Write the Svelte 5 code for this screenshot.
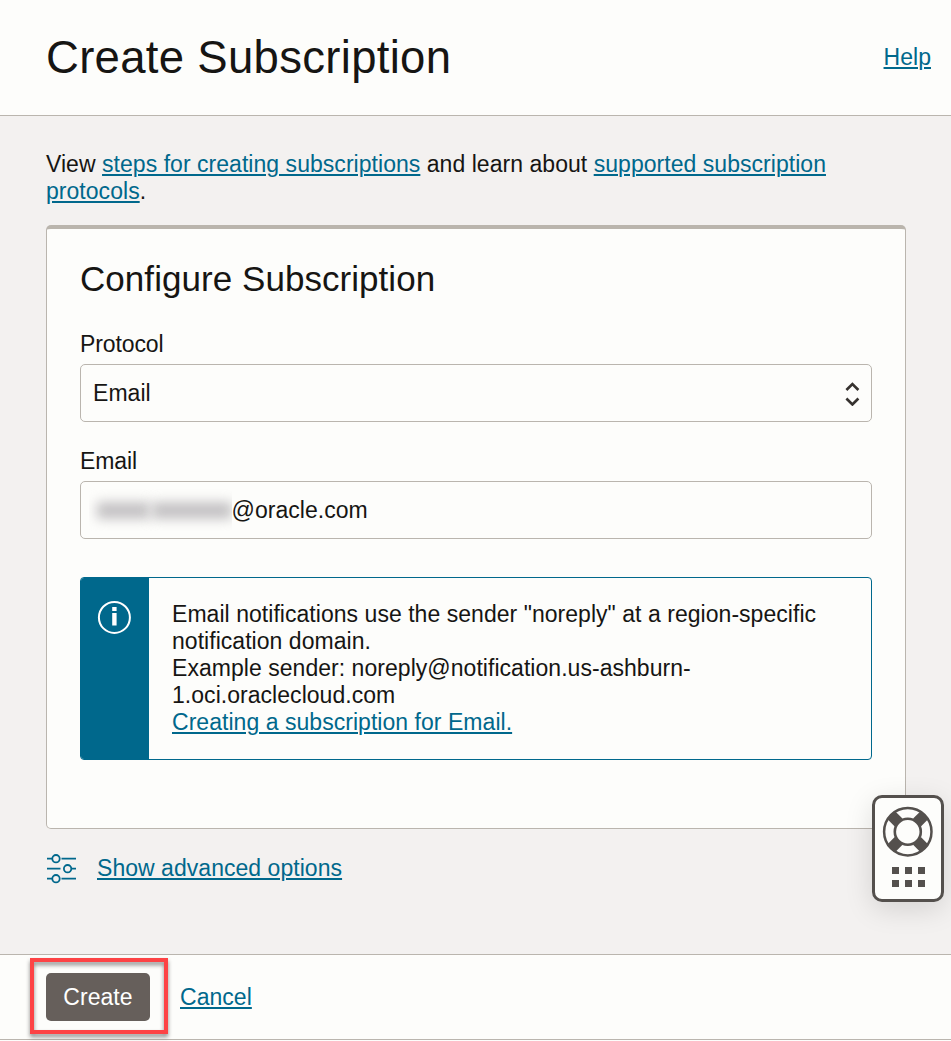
<script>
  let email = $state('@oracle.com');
</script>

<div class="page">
  <header>
    <h1>Create Subscription</h1>
    <a href="#help">Help</a>
  </header>

  <main>
    <p class="intro">
      View <a href="#steps">steps for creating subscriptions</a> and learn about
      <a href="#protocols">supported subscription protocols</a>.
    </p>

    <section class="card">
      <h2>Configure Subscription</h2>
      <div class="label">Protocol</div>
      <div class="field select">
        <span>Email</span>
        <svg width="16" height="26" viewBox="0 0 16 26" fill="none" stroke="#36322f" stroke-width="2.6">
          <path d="M2.4 10 L8.4 4 L14.4 10 M2.4 18.5 L8.4 24.5 L14.4 18.5" />
        </svg>
      </div>
      <div class="label second">Email</div>
      <div class="field email">
        <span class="mask"><i></i><i></i></span><span>{email}</span>
      </div>

      <div class="notice">
        <div class="stripe">
          <svg width="34" height="34" viewBox="0 0 34 34">
            <circle cx="17.4" cy="17.4" r="15.5" fill="none" stroke="#fff" stroke-width="2" />
            <path d="M15.2 7h4.4v4h-4.4zM15.2 13h4.4v12.5h-4.4z" fill="#fff" />
          </svg>
        </div>
        <div class="text">
          Email notifications use the sender "noreply" at a region-specific notification domain.<br />
          Example sender: noreply@notification.us-ashburn-<br />1.oci.oraclecloud.com<br />
          <a href="#email">Creating a subscription for Email.</a>
        </div>
      </div>
    </section>

    <div class="advanced">
      <svg width="30" height="30" viewBox="0 0 30 30" fill="none" stroke="#00688c" stroke-width="1.8">
        <path d="M0 4.7H5.2M14.5 4.7H29M0 14.7H13.5M24.5 14.7H29M0 24.7H5.2M14.5 24.7H29" />
        <circle cx="9" cy="4.7" r="3.7" />
        <circle cx="20.6" cy="14.7" r="3.7" />
        <circle cx="9" cy="24.7" r="3.7" />
      </svg>
      <a href="#advanced">Show advanced options</a>
    </div>
  </main>

  <footer>
    <button>Create</button>
    <a href="#cancel">Cancel</a>
    <div class="highlight"></div>
  </footer>

  <div class="support">
    <svg width="66" height="101" viewBox="875 798 66 101">
      <g fill="none" stroke="#54504d">
        <circle cx="907.8" cy="831.7" r="23.7" stroke-width="2.5" />
        <circle cx="907.8" cy="831.7" r="13" stroke-width="2.6" />
        <path
          d="M898.6 822.5L891.2 815.1M917 822.5L924.4 815.1M917 840.9L924.4 848.3M898.6 840.9L891.2 848.3"
          stroke-width="11"
        />
      </g>
      {#each [867, 880] as y}
        {#each [892, 905, 918] as x}
          <rect {x} {y} width="7" height="7" fill="#54504d" />
        {/each}
      {/each}
    </svg>
  </div>
</div>

<style>
  :global(body) {
    margin: 0;
    overflow: hidden;
  }
  * {
    box-sizing: border-box;
  }
  .page {
    position: relative;
    width: 951px;
    height: 1041px;
    display: flex;
    flex-direction: column;
    background: #fdfdfb;
    color: #161513;
    font: 23px/27px 'Liberation Sans', Arial, sans-serif;
    letter-spacing: 0.04px;
  }
  a {
    color: #00688c;
    text-decoration: underline;
    text-decoration-thickness: 2px;
    text-underline-offset: 2px;
  }
  header {
    height: 116px;
    flex: none;
    display: flex;
    align-items: center;
    justify-content: space-between;
    padding: 0 20px 0 46px;
    border-bottom: 1px solid #bab5ae;
  }
  header a {
    padding-bottom: 1px;
  }
  h1 {
    margin: 0;
    font-size: 45.5px;
    line-height: 52px;
    font-weight: 400;
    letter-spacing: 0.3px;
  }
  main {
    height: 838px;
    flex: none;
    background: #f3f1f0;
    padding: 35px 45px 0 46px;
  }
  .intro {
    margin: 0 0 20px;
  }
  .card {
    height: 604px;
    background: #fdfdfb;
    border: 1px solid #bab5ae;
    border-top: 4px solid #bab5ad;
    border-radius: 5px;
    padding: 30px 33px 0;
  }
  h2 {
    margin: 0 0 32px;
    font-size: 35px;
    line-height: 40px;
    font-weight: 400;
    letter-spacing: 0.05px;
  }
  .label {
    margin-bottom: 6px;
    letter-spacing: -0.1px;
  }
  .second {
    margin-top: 26px;
  }
  .field {
    height: 58px;
    border: 1px solid #bab5ae;
    border-radius: 5px;
    padding: 0 11px 0 12px;
    display: flex;
    align-items: center;
  }
  .select {
    justify-content: space-between;
  }
  .email {
    padding-left: 8px;
  }
  .mask {
    width: 142.5px;
    height: 42px;
    display: flex;
    align-items: center;
    gap: 2px;
    padding-left: 8px;
    overflow: hidden;
  }
  .mask i {
    width: 66px;
    height: 17px;
    background: #c3c1c3;
    filter: blur(6px);
  }
  .mask i + i {
    width: 80px;
    flex: none;
  }
  .notice {
    margin-top: 38px;
    height: 183px;
    border: 1px solid #00688c;
    border-radius: 4px;
    display: flex;
    overflow: hidden;
  }
  .stripe {
    width: 68px;
    flex: none;
    background: #00688c;
    padding: 22px 0 0 16px;
  }
  .text {
    padding: 23px 20px 0 23px;
  }
  .advanced {
    display: flex;
    align-items: center;
    gap: 20px;
    margin-top: 25px;
    padding-left: 1px;
  }
  .advanced a {
    padding-bottom: 2px;
  }
  footer {
    position: relative;
    height: 86px;
    flex: none;
    display: flex;
    align-items: center;
    gap: 30px;
    padding-left: 46px;
    border-top: 1px solid #bab5ae;
    border-bottom: 1px solid #bab5ae;
  }
  footer a {
    padding-top: 1px;
  }
  button {
    width: 104px;
    height: 48px;
    padding: 0;
    border: 0;
    border-radius: 5px;
    background: #665f5b;
    color: #fff;
    font: inherit;
    letter-spacing: inherit;
  }
  .highlight {
    position: absolute;
    left: 30px;
    top: 3px;
    width: 138px;
    height: 76px;
    border: 4px solid #fd4345;
    filter: drop-shadow(0 3px 2px rgba(0, 0, 0, 0.45));
  }
  .support {
    position: absolute;
    left: 872px;
    top: 795px;
    width: 72px;
    height: 107px;
    border: 3px solid #54504d;
    border-radius: 10px;
    background: #fdfdfb;
    box-shadow: 0 7px 28px rgba(0, 0, 0, 0.13);
  }
  .support svg {
    display: block;
  }
</style>
